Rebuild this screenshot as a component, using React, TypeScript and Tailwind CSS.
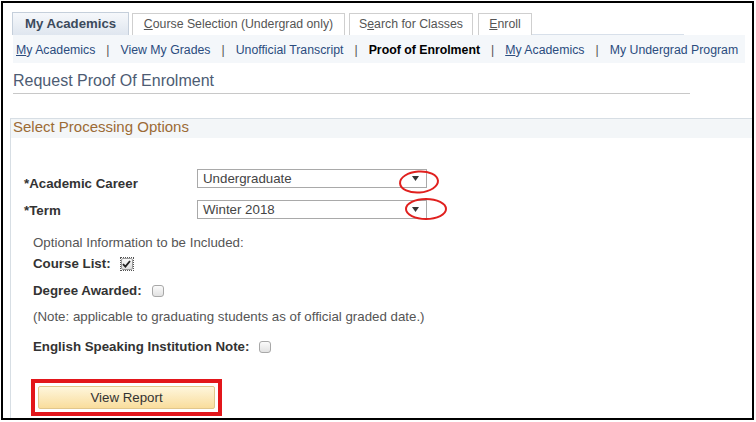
import type { JSX } from 'react'

function Arrow(): JSX.Element {
  return (
    <svg width="7" height="5" viewBox="0 0 7 5" className="mr-[7px]">
      <path d="M0 0 L7 0 L3.5 5 Z" fill="#333" />
    </svg>
  )
}

function Select({ value }: { value: string }): JSX.Element {
  return (
    <div className="flex h-[19px] w-[230px] items-center justify-between border border-[#a9a9a9] bg-white pl-[5px] text-[13.3px] leading-[17px] text-[#444]">
      <span>{value}</span>
      <Arrow />
    </div>
  )
}

function Box({ checked }: { checked?: boolean }): JSX.Element {
  if (checked) {
    return (
      <span className="ml-[9px] inline-flex h-[14px] w-[14px] items-center justify-center outline-1 outline-dotted outline-[#555] -outline-offset-1">
        <span className="flex h-[12px] w-[12px] items-center justify-center rounded-[2px] border border-[#9a9a9a] bg-gradient-to-b from-[#fafafa] to-[#dedede]">
          <svg width="9" height="8" viewBox="0 0 9 8">
            <path d="M1 4.2 L3.4 6.6 L8 1" stroke="#222" strokeWidth="1.8" fill="none" />
          </svg>
        </span>
      </span>
    )
  }
  return (
    <span className="ml-[10px] inline-block h-[12px] w-[12px] rounded-[3px] border border-[#a8a8a8] bg-gradient-to-b from-[#fbfbfb] to-[#e2e2e2]" />
  )
}

export default function App(): JSX.Element {
  return (
    <div className="h-[422px] w-[756px] overflow-hidden bg-white font-['Liberation_Sans',Arial,sans-serif]">
      <div className="relative ml-px mt-px h-[419px] w-[753px] overflow-hidden border-2 border-black">
        {/* tabs */}
        <div className="flex items-end pl-[9px] pt-[9px]">
          <div className="flex h-[23px] w-[117px] items-center justify-center border border-b-0 border-[#c5cfdb] bg-gradient-to-b from-[#f6f8fb] to-[#dfe6ef] text-[13.2px] font-bold text-[#3c4a5c]">
            My Academics
          </div>
          <div className="ml-[3px] flex h-[22px] w-[213px] items-center justify-center border border-b-0 border-[#cfcfcf] text-[12.3px] text-[#555]">
            <span><u>C</u>ourse Selection (Undergrad only)</span>
          </div>
          <div className="ml-[4px] flex h-[22px] w-[124px] items-center justify-center border border-b-0 border-[#cfcfcf] text-[12.3px] text-[#555]">
            <span>S<u>e</u>arch for Classes</span>
          </div>
          <div className="ml-[5px] flex h-[22px] w-[54px] items-center justify-center border border-b-0 border-[#cfcfcf] text-[12.3px] text-[#555]">
            <span><u>E</u>nroll</span>
          </div>
          <div className="w-[152px] border-b border-[#d8e0ea]" />
        </div>

        {/* sub navigation */}
        <div className="ml-[10px] flex h-[28px] w-[732px] items-center gap-[11px] bg-[#f4f7fa] pl-[3px] pt-[3px] text-[12.3px] text-[#2b4c7e]">
          <span><u>M</u>y Academics</span>
          <span className="text-[#555]">|</span>
          <span>View My Grades</span>
          <span className="text-[#555]">|</span>
          <span>Unofficial Transcript</span>
          <span className="text-[#555]">|</span>
          <span className="font-bold text-black">Proof of Enrolment</span>
          <span className="text-[#555]">|</span>
          <span><u>M</u>y Academics</span>
          <span className="text-[#555]">|</span>
          <span>My Undergrad Program</span>
        </div>

        {/* page title */}
        <div className="ml-[10px] mt-[8px] w-[677px] border-b border-[#c8c8c8] pb-[2px] text-[16px] leading-[20px] text-[#4d5c73]">
          Request Proof Of Enrolment
        </div>

        {/* processing options */}
        <div className="ml-[7px] mt-[24px] h-[320px] border-l border-t border-[#d7dee4]">
          <div className="h-[19px] bg-[#f3f6f8] pl-[2px] text-[15px] leading-[16px] text-[#9c6b35]">
            Select Processing Options
          </div>

          <div className="mt-[31px] flex h-[19px] pl-[13px]">
            <div className="w-[173px] pt-[7px] text-[13.3px] font-bold leading-[16px] text-[#333]">*Academic Career</div>
            <Select value="Undergraduate" />
          </div>
          <div className="mt-[12px] flex h-[19px] pl-[13px]">
            <div className="w-[173px] pt-[3px] text-[13.3px] font-bold leading-[16px] text-[#333]">*Term</div>
            <Select value="Winter 2018" />
          </div>

          <div className="pl-[22px] text-[13.3px] leading-[16px]">
            <div className="mt-[16px] text-[#555]">Optional Information to be Included:</div>
            <div className="mt-[5px] flex items-center font-bold text-[#333]">
              Course List:<Box checked />
            </div>
            <div className="mt-[11px] flex items-center font-bold text-[#333]">
              Degree Awarded:<Box />
            </div>
            <div className="mt-[10px] text-[#555]">(Note: applicable to graduating students as of official graded date.)</div>
            <div className="mt-[14px] flex items-center font-bold text-[#333]">
              English Speaking Institution Note:<Box />
            </div>

            <div className="-ml-[2px] mt-[24px] w-[191px] border-4 border-[#e3161b] p-[3px]">
              <button className="flex h-[23px] w-full items-center justify-center rounded-[2px] border border-[#e2c78c] bg-gradient-to-b from-[#fef6dc] to-[#f9dd9c] text-[13.3px] text-[#333]">
                View Report
              </button>
            </div>
          </div>
        </div>

        {/* annotation ellipses */}
        <svg className="absolute left-[395px] top-[166px]" width="42" height="26" viewBox="0 0 42 26">
          <ellipse cx="21" cy="13" rx="19" ry="10.5" transform="rotate(-4 21 13)" stroke="#e0201e" strokeWidth="2" fill="none" />
        </svg>
        <svg className="absolute left-[401px] top-[194px]" width="44" height="24" viewBox="0 0 44 24">
          <ellipse cx="22" cy="12" rx="20" ry="10" stroke="#e0201e" strokeWidth="2" fill="none" />
        </svg>
      </div>
    </div>
  )
}
